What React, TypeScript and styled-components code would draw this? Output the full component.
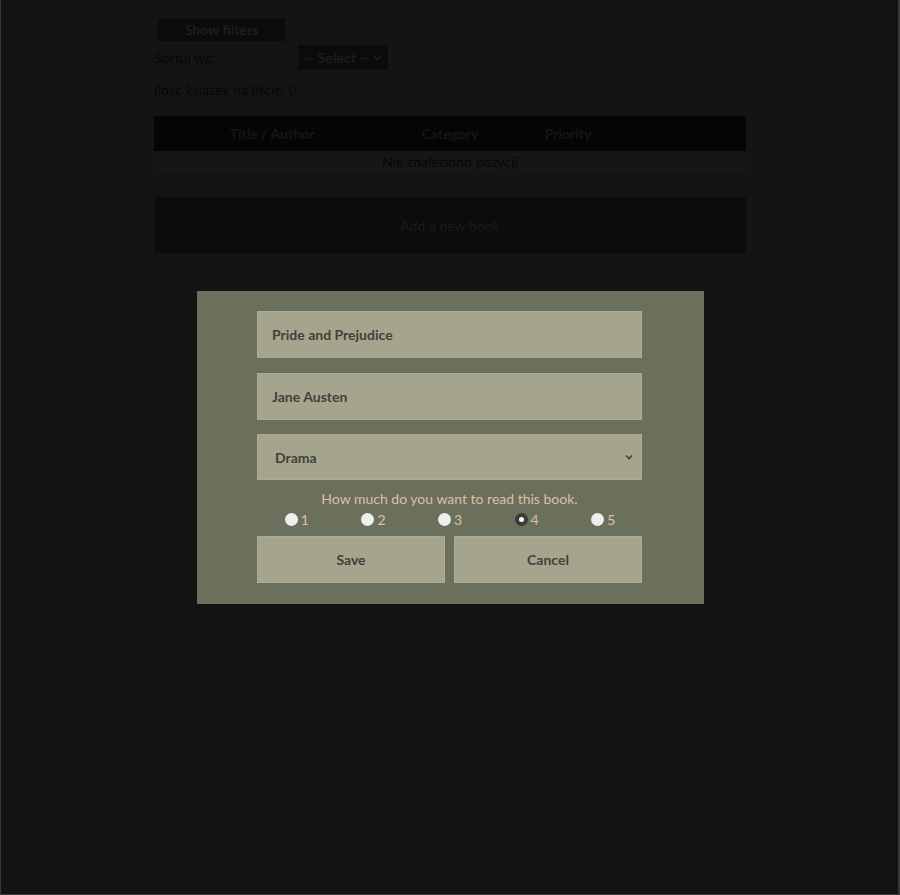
import React, { useState } from "react";
import styled, { createGlobalStyle } from "styled-components";

const Global = createGlobalStyle`
  html, body { margin: 0; padding: 0; }
  body {
    background: #2a2824;
    font-family: Lato, "Open Sans", sans-serif;
    font-size: 14px;
    color: #0e0e0e;
  }
  * { box-sizing: border-box; }
`;

const Page = styled.div`
  width: 592px;
  margin: 0 auto;
  padding-top: 18px;
  display: flex;
  flex-direction: column;
`;

const FilterButton = styled.button`
  align-self: flex-start;
  margin-left: 4px;
  width: 127px;
  height: 23px;
  border: none;
  background: #171716;
  color: #3a3a36;
  font-family: inherit;
  font-weight: 700;
  font-size: 14px;
`;

const SortRow = styled.div`
  display: flex;
  align-items: center;
  margin-top: 4px;
  height: 25px;
`;

const SortLabel = styled.span`
  width: 144px;
`;

const SortSelect = styled.div`
  width: 90px;
  height: 25px;
  background: #171716;
  color: #383834;
  font-weight: 700;
  display: flex;
  align-items: center;
  justify-content: space-between;
  padding: 0 6px;
  font-size: 14px;
`;

const CountText = styled.div`
  margin-top: 10px;
  line-height: 20px;
`;

const Table = styled.table`
  margin-top: 16px;
  width: 100%;
  border-collapse: collapse;
  table-layout: fixed;
`;

const Th = styled.th<{ $w: number }>`
  width: ${(p) => p.$w}px;
  height: 35px;
  background: #0a0a0a;
  color: #2a2a27;
  font-weight: 700;
  padding: 0;
`;

const EmptyCell = styled.td`
  height: 21px;
  padding: 0;
  background: #2e2d2a;
  text-align: center;
  color: #0e0e0e;
  line-height: 19px;
`;

const AddBox = styled.div`
  margin-top: 25px;
  height: 56px;
  background: #181817;
  color: #363632;
  font-size: 14px;
  display: flex;
  align-items: center;
  justify-content: center;
`;

const Overlay = styled.div`
  position: fixed;
  inset: 0;
  background: rgba(0, 0, 0, 0.5);
  border: 1px solid #3a3a38;
  border-right-width: 2px;
  border-top: none;
  display: flex;
  justify-content: center;
  align-items: flex-start;
  padding-top: 291px;
`;

const Modal = styled.div`
  width: 507px;
  margin-left: 2px;
  background: #6b705c;
  padding: 20px 62px 21px 60px;
  display: flex;
  flex-direction: column;
  font-family: Lato, "Open Sans", sans-serif;
`;

const Field = styled.div<{ $pad?: number }>`
  height: 47px;
  background: #a5a58d;
  border: 1px solid #acac95;
  color: #3f4238;
  font-weight: 700;
  font-size: 14px;
  display: flex;
  align-items: center;
  justify-content: space-between;
  padding: 0 8px 0 ${(p) => p.$pad ?? 14}px;
  margin-bottom: 15px;
  &:nth-child(3) {
    margin-top: -1px;
    height: 46px;
  }
`;

const Question = styled.div`
  margin-top: -6px;
  text-align: center;
  color: #ddbea9;
  line-height: 20px;
  font-size: 14px;
`;

const RadioRow = styled.div`
  display: flex;
  justify-content: space-around;
  height: 20px;
  align-items: center;
  padding-left: 2px;
`;

const RadioItem = styled.label`
  display: flex;
  align-items: center;
  gap: 3px;
  color: #ddbea9;
  font-size: 14px;
  width: 25px;
`;

const RadioDot = styled.input`
  appearance: none;
  margin: 0;
  width: 13px;
  height: 13px;
  border-radius: 50%;
  background: #eeeeee;
  &:checked {
    background: #ffffff;
    border: 4px solid #3b3b38;
  }
`;

const Buttons = styled.div`
  margin-top: 7px;
  display: grid;
  grid-template-columns: 1fr 1fr;
  gap: 9px;
`;

const ModalButton = styled.button`
  height: 47px;
  background: #a5a58d;
  border: 1px solid #acac95;
  color: #3f4238;
  font-family: inherit;
  font-weight: 700;
  font-size: 14px;
`;

export default function App() {
  const [prio, setPrio] = useState(4);
  return (
    <>
      <Global />
      <Page>
        <FilterButton>Show filters</FilterButton>
        <SortRow>
          <SortLabel>Sortuj wg:</SortLabel>
          <SortSelect>
            <span>-- Select --</span>
            <svg width="9" height="6" viewBox="0 0 9 6">
              <path d="M1 1l3.5 3.5L8 1" fill="none" stroke="#383834" strokeWidth="1.6" />
            </svg>
          </SortSelect>
        </SortRow>
        <CountText>Ilość książek na liście: 0</CountText>
        <Table>
          <thead>
            <tr>
              <Th $w={236}>Title / Author</Th>
              <Th $w={120}>Category</Th>
              <Th $w={116}>Priority</Th>
              <Th $w={120}></Th>
            </tr>
          </thead>
          <tbody>
            <tr>
              <EmptyCell colSpan={4}>Nie znaleziono pozycji</EmptyCell>
            </tr>
          </tbody>
        </Table>
        <AddBox>Add a new book</AddBox>
      </Page>
      <Overlay>
        <Modal>
          <Field>Pride and Prejudice</Field>
          <Field>Jane Austen</Field>
          <Field $pad={17}>
            <span>Drama</span>
            <svg width="8" height="6" viewBox="0 0 8 6">
              <path d="M1 1.5l3 3 3-3" fill="none" stroke="#3f4238" strokeWidth="1.6" />
            </svg>
          </Field>
          <Question>How much do you want to read this book.</Question>
          <RadioRow>
            {[1, 2, 3, 4, 5].map((n) => (
              <RadioItem key={n}>
                <RadioDot
                  type="radio"
                  name="prio"
                  checked={prio === n}
                  onChange={() => setPrio(n)}
                />
                {n}
              </RadioItem>
            ))}
          </RadioRow>
          <Buttons>
            <ModalButton>Save</ModalButton>
            <ModalButton>Cancel</ModalButton>
          </Buttons>
        </Modal>
      </Overlay>
    </>
  );
}
